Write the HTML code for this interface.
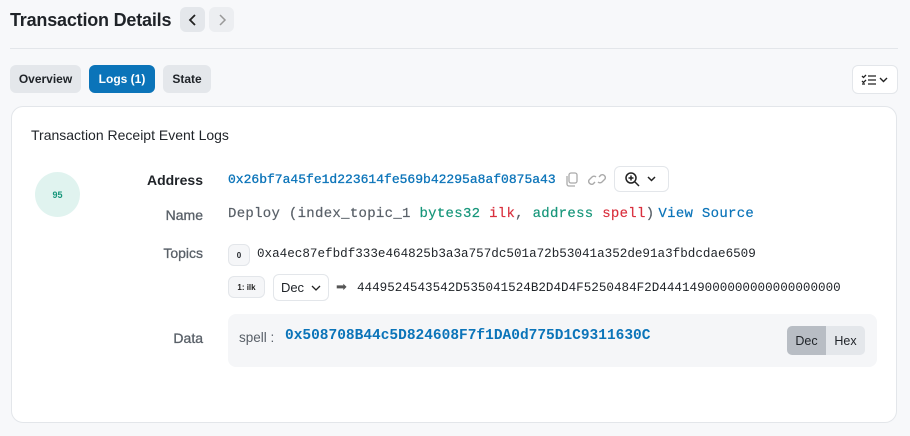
<!DOCTYPE html>
<html><head><meta charset="utf-8"><style>
*{box-sizing:border-box;margin:0;padding:0}
body{width:910px;height:436px;background:#f7f8fa;font-family:"Liberation Sans",sans-serif;color:#1f2328;position:relative;overflow:hidden}
.abs{position:absolute}
.mono{font-family:"Liberation Mono",monospace}
.btn{position:absolute;border-radius:6px;font-size:12px;font-weight:bold;display:flex;align-items:center;justify-content:center}
.lbl{position:absolute;right:707px;font-size:14px;color:#596068;text-align:right;-webkit-text-stroke:0.3px #596068}
</style></head><body>
<div class="abs" style="left:10px;top:8px;font-size:18px;font-weight:bold;line-height:24px;letter-spacing:-0.2px">Transaction Details</div>
<div class="btn" style="left:180px;top:7px;width:25px;height:25px;background:#e4e7eb"><svg width="10" height="12" viewBox="0 0 10 12"><path d="M7 1L2 6l5 5" stroke="#222" stroke-width="1.8" fill="none"/></svg></div>
<div class="btn" style="left:209px;top:7px;width:25px;height:25px;background:#eceef1"><svg width="10" height="12" viewBox="0 0 10 12"><path d="M3 1l5 5-5 5" stroke="#999" stroke-width="1.5" fill="none"/></svg></div>
<div class="abs" style="left:10px;top:48px;width:888px;height:1px;background:#e3e6ea"></div>
<div class="btn" style="left:10px;top:65px;width:71px;height:28px;background:#e4e7eb">Overview</div>
<div class="btn" style="left:89px;top:65px;width:66px;height:28px;background:#0b74b9;color:#fff">Logs (1)</div>
<div class="btn" style="left:163px;top:65px;width:48px;height:28px;background:#e4e7eb">State</div>
<div class="btn" style="left:852px;top:65px;width:46px;height:29px;background:#fff;border:1px solid #e3e6ea"><svg width="30" height="14" viewBox="0 0 30 14"><path d="M2 3l1.5 1.5L6 2M2 8l1.5 1.5L6 7M8 3h8M8 7h8M8 11h8M2 11h3" stroke="#222" stroke-width="1.3" fill="none"/><path d="M20 5l3.5 3.5L27 5" stroke="#222" stroke-width="1.4" fill="none"/></svg></div>
<div class="abs" style="left:11px;top:106px;width:886px;height:317px;background:#fff;border:1px solid #e3e6ea;border-radius:12px"></div>
<div class="abs" style="left:31px;top:126px;font-size:14px;line-height:18px">Transaction Receipt Event Logs</div>
<div class="abs" style="left:35px;top:172px;width:45px;height:45px;border-radius:50%;background:#e0f3ef;color:#16967a;font-size:9px;font-weight:bold;display:flex;align-items:center;justify-content:center">95</div>
<div class="lbl" style="top:172px;color:#1f2328;font-weight:bold;-webkit-text-stroke:0">Address</div>
<div class="abs mono" style="left:228px;top:172px;font-size:13px;color:#0b74b9;-webkit-text-stroke:0.3px #0b74b9">0x26bf7a45fe1d223614fe569b42295a8af0875a43</div>
<svg class="abs" style="left:565px;top:172px" width="14" height="15" viewBox="0 0 14 15"><rect x="4" y="1" width="8" height="10" rx="2" stroke="#aaa" stroke-width="1.3" fill="none"/><path d="M2 4v8a2 2 0 002 2h6" stroke="#aaa" stroke-width="1.3" fill="none"/></svg>
<svg class="abs" style="left:588px;top:172px" width="18" height="15" viewBox="0 0 18 15"><path d="M7 10l-2 2a3 3 0 01-4-4l3-3a3 3 0 014 0M11 5l2-2a3 3 0 014 4l-3 3a3 3 0 01-4 0" stroke="#aaa" stroke-width="1.4" fill="none"/></svg>
<div class="btn" style="left:614px;top:166px;width:55px;height:26px;background:#fff;border:1px solid #e3e6ea"><svg width="36" height="16" viewBox="0 0 36 16"><circle cx="7" cy="7" r="5" stroke="#222" stroke-width="1.5" fill="none"/><path d="M11 11l4 4M7 4.5v5M4.5 7h5" stroke="#222" stroke-width="1.5"/><path d="M24 6l3.5 3.5L31 6" stroke="#222" stroke-width="1.5" fill="none"/></svg></div>
<div class="lbl" style="top:207px">Name</div>
<div class="abs mono" style="left:228px;top:206px;font-size:14px;letter-spacing:0.3px;color:#596068;white-space:pre;-webkit-text-stroke:0.2px">Deploy (index_topic_1 <span style="color:#16967a">bytes32</span> <span style="color:#d9303e">ilk</span>, <span style="color:#16967a">address</span> <span style="color:#d9303e">spell</span>)<span style="color:#0b74b9;margin-left:4px">View Source</span></div>
<div class="lbl" style="top:245px">Topics</div>
<div class="btn" style="left:228px;top:244px;width:22px;height:22px;background:#f5f6f8;border:1px solid #e3e6ea;font-size:8px">0</div>
<div class="abs mono" style="left:257px;top:247px;font-size:12.6px">0xa4ec87efbdf333e464825b3a3a757dc501a72b53041a352de91a3fbdcdae6509</div>
<div class="btn" style="left:228px;top:276px;width:37px;height:22px;background:#f5f6f8;border:1px solid #e3e6ea;font-size:8px;font-weight:bold;color:#222">1: ilk</div>
<div class="btn" style="left:273px;top:274px;width:56px;height:27px;background:#fff;border:1px solid #e3e6ea;font-weight:normal;font-size:13px">Dec <svg style="margin-left:7px" width="10" height="8" viewBox="0 0 10 8"><path d="M1 2l4 4 4-4" stroke="#222" stroke-width="1.3" fill="none"/></svg></div>
<div class="abs" style="left:336px;top:279px;font-size:13px;color:#555">➡</div>
<div class="abs mono" style="left:357px;top:281px;font-size:12.6px">4449524543542D535041524B2D4D4F5250484F2D444149000000000000000000</div>
<div class="lbl" style="top:330px">Data</div>
<div class="abs" style="left:228px;top:314px;width:649px;height:53px;background:#f5f6f8;border-radius:8px"></div>
<div class="abs" style="left:239px;top:330px;font-size:13.5px;color:#596068">spell :</div>
<div class="abs mono" style="left:285px;top:328px;font-size:14.5px;font-weight:bold;color:#0b74b9">0x508708B44c5D824608F7f1DA0d775D1C9311630C</div>
<div class="abs" style="left:787px;top:326px;width:78px;height:29px;border-radius:5px;overflow:hidden;display:flex;font-size:12.5px">
<div style="width:39px;background:#b8bdc4;display:flex;align-items:center;justify-content:center">Dec</div>
<div style="width:39px;background:#e4e7eb;display:flex;align-items:center;justify-content:center">Hex</div></div>
</body></html>
